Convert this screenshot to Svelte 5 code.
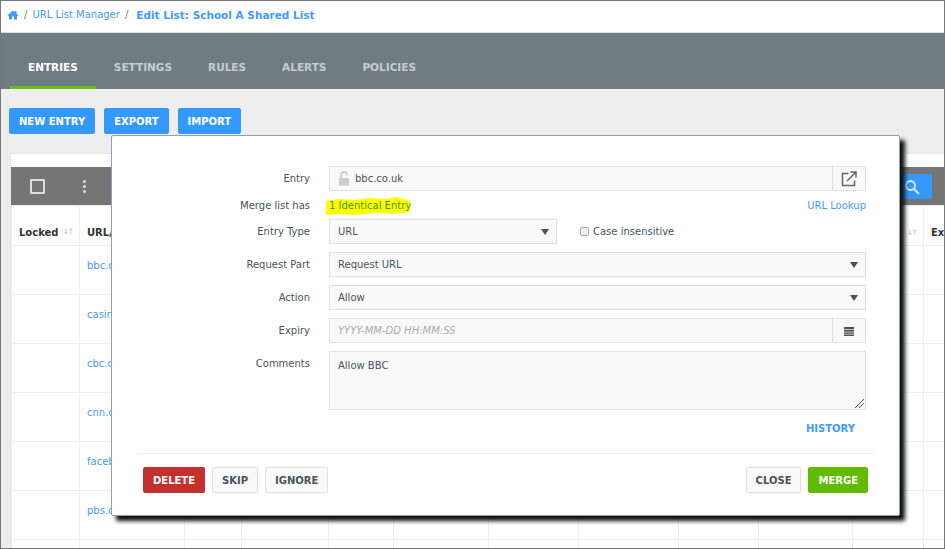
<script>
	const tabs = ['ENTRIES', 'SETTINGS', 'RULES', 'ALERTS', 'POLICIES'];
	const columns = [
		{ name: 'Locked', width: 68, sort: true },
		{ name: 'URL/Pattern', width: 105 },
		{ name: '', width: 57 },
		{ name: '', width: 87 },
		{ name: '', width: 65 },
		{ name: '', width: 95 },
		{ name: '', width: 90 },
		{ name: '', width: 100 },
		{ name: '', width: 80 },
		{ name: '', width: 94 },
		{ name: '', width: 71, sort: true },
		{ name: 'Expiry', width: 30 }
	];
	const rows = [
		{ url: 'bbc.co.uk' },
		{ url: 'casino.com' },
		{ url: 'cbc.ca' },
		{ url: 'cnn.com' },
		{ url: 'facebook.com' },
		{ url: 'pbs.org' },
		{ url: 'pinterest.com', date: 'Aug 2, 2018 09:20:52' },
		{ url: 'reddit.com', edit: 'Edit', type: 'URL', part: 'URL', action: 'Deny', date: 'Aug 2, 2018 09:20:52', user: 'admin' }
	];
</script>

<div class="page">
	<nav class="crumbs">
		<svg class="home" viewBox="0 0 24 20" width="12" height="10"><path d="M12 1 1 10.500 2.500 12.200 4 11v8h6v-6h4v6h6v-8l1.500 1.200L23 10.500 19 7V2h-3v2.400z" /></svg>
		<span class="sep">/</span>
		<a href="#list">URL List Manager</a>
		<span class="sep">/</span>
		<a class="current" href="#edit">Edit List: School A Shared List</a>
	</nav>

	<div class="tabs">
		{#each tabs as tab, i}
			<div class="tab" class:active={i === 0}>{tab}</div>
		{/each}
	</div>

	<div class="actions">
		<button class="btn blue">NEW ENTRY</button>
		<button class="btn blue">EXPORT</button>
		<button class="btn blue">IMPORT</button>
	</div>

	<section class="panel">
		<div class="strip"></div>
		<div class="toolbar">
			<span class="check"></span>
			<span class="dots"><i></i><i></i><i></i></span>
			<span class="search">
				<svg viewBox="0 0 16 16" width="16" height="16"><circle cx="6.500" cy="6.500" r="4.500" /><path d="m10 10 5 5" /></svg>
			</span>
		</div>
		<table>
			<colgroup>
				{#each columns as col}
					<col style:width="{col.width}px" />
				{/each}
			</colgroup>
			<thead>
				<tr>
					{#each columns as col}
						<th>
							{col.name}
							{#if col.sort}<span class="sort">↓↑</span>{/if}
						</th>
					{/each}
				</tr>
			</thead>
			<tbody>
				{#each rows as row}
					<tr>
						<td></td>
						<td><a href="#u">{row.url}</a></td>
						<td><a href="#e">{row.edit ?? ''}</a></td>
						<td><a href="#t">{row.type ?? ''}</a></td>
						<td><a href="#p">{row.part ?? ''}</a></td>
						<td><a href="#a">{row.action ?? ''}</a></td>
						<td></td>
						<td>{row.date ?? ''}</td>
						<td>{row.user ?? ''}</td>
						<td></td>
						<td></td>
						<td></td>
					</tr>
				{/each}
			</tbody>
		</table>
	</section>

	<div class="modal">
		<div class="form">
			<span class="label">Entry</span>
			<div class="group">
				<div class="field input">
					<svg class="lock" viewBox="0 0 12 15" width="12" height="15"><path d="M1 7h10v7.500H1z" /><path class="shackle" d="M3 7V4a3 3 0 0 1 6 0v.5" /></svg>
					bbc.co.uk
				</div>
				<span class="addon">
					<svg viewBox="0 0 16 16" width="16" height="16"><path class="stroke" d="M13.500 9.500v5h-12v-12h6" /><path class="stroke" d="M6 10 14.500 1.500M9.500 1h5.500v5.500" /></svg>
				</span>
			</div>

			<span class="label">Merge list has</span>
			<div class="merge">
				<span class="identical">
					<svg class="marker" viewBox="0 0 86 20" width="86" height="20" preserveAspectRatio="none"><path d="M1 5 14 3 30 4 44 2 62 3 70 1 80 3 85 5 85 16 70 18 50 17 30 19 12 18 1 19z" /></svg>
					<span class="identical-text">1 Identical Entry</span>
				</span>
				<a href="#lookup">URL Lookup</a>
			</div>

			<span class="label">Entry Type</span>
			<div class="type-row">
				<div class="field select short">URL<span class="caret"></span></div>
				<label class="case"><span class="box"></span>Case insensitive</label>
			</div>

			<span class="label">Request Part</span>
			<div class="field select">Request URL<span class="caret"></span></div>

			<span class="label">Action</span>
			<div class="field select">Allow<span class="caret"></span></div>

			<span class="label">Expiry</span>
			<div class="group">
				<div class="field input placeholder">YYYY-MM-DD HH:MM:SS</div>
				<span class="addon cal">
					<svg viewBox="0 0 10 10" width="10" height="10"><path fill="#45535e" d="M0 1h10v9H0z" /><path stroke="#fff" d="M0 3.500h10M0 6h10M0 8.200h10" stroke-width=".7" /></svg>
				</span>
			</div>

			<span class="label top">Comments</span>
			<div class="field area">
				Allow BBC
				<svg class="grip" viewBox="0 0 9 9" width="9" height="9"><path d="M0 9 9 0M4 9l5-5" /></svg>
			</div>
		</div>

		<div class="history"><a href="#history">HISTORY</a></div>

		<footer>
			<button class="btn red">DELETE</button>
			<button class="btn plain">SKIP</button>
			<button class="btn plain">IGNORE</button>
			<span class="spacer"></span>
			<button class="btn plain">CLOSE</button>
			<button class="btn green">MERGE</button>
		</footer>
	</div>
</div>

<style>
	:global(body) {
		margin: 0;
	}

	.page {
		position: relative;
		box-sizing: border-box;
		width: 945px;
		height: 549px;
		overflow: hidden;
		border: 1px solid #777;
		background: #eee;
		font-family: "DejaVu Sans", Verdana, sans-serif;
		font-size: 10px;
		color: #45535e;
	}

	a {
		color: #3f9bff;
		text-decoration: none;
	}

	.crumbs {
		display: flex;
		align-items: center;
		height: 32px;
		padding: 0 0 4px 6px;
		box-sizing: border-box;
		background: #fff;
		border-bottom: 1px solid #ddd;
		gap: 5px;
	}

	.home {
		fill: #3f9bff;
	}

	.sep {
		color: #777;
	}

	.current {
		margin-left: 3px;
		font-weight: 700;
		font-size: 10.500px;
	}

	.tabs {
		display: flex;
		align-items: flex-end;
		height: 56px;
		padding-left: 9px;
		background: #6f7d83;
	}

	.tab {
		padding: 0 18px 13px;
		color: #c5cdd1;
		font-weight: 700;
		font-size: 10.500px;
		border-bottom: 3px solid transparent;
	}

	.tab.active {
		color: #fff;
		border-color: #66c011;
	}

	.actions {
		display: flex;
		gap: 9px;
		padding: 19px 0 0 8px;
	}

	.btn {
		height: 26px;
		padding: 0 9px;
		border: 1px solid #e0e0e0;
		border-radius: 2px;
		font: 700 10px "DejaVu Sans", Verdana, sans-serif;
		background: #f9f9f9;
		color: #45535e;
	}

	.btn.blue {
		background: #3399ff;
		border-color: #3399ff;
		color: #fff;
	}

	.btn.red {
		background: #c4302e;
		border-color: #c4302e;
		color: #fff;
	}

	.btn.green {
		background: #62bb00;
		border-color: #62bb00;
		color: #fff;
	}

	.panel {
		margin: 19px 0 0 9px;
		background: #fff;
		border-left: 1px solid #e6e6e6;
	}

	.strip {
		height: 13px;
		border-top: 1px solid #e6e6e6;
	}

	.toolbar {
		display: flex;
		align-items: center;
		height: 38px;
		background: #757575;
		padding-left: 19px;
		position: relative;
	}

	.check {
		width: 11px;
		height: 11px;
		border: 2px solid #ddd;
		border-radius: 1px;
	}

	.dots {
		display: flex;
		flex-direction: column;
		gap: 2px;
		margin-left: 38px;
	}

	.dots i {
		width: 3px;
		height: 3px;
		border-radius: 50%;
		background: #ddd;
	}

	.search {
		position: absolute;
		left: 880px;
		top: 7px;
		width: 41px;
		height: 25px;
		display: flex;
		align-items: center;
		justify-content: center;
		background: #3399ff;
		border-radius: 2px;
	}

	.search svg {
		fill: none;
		stroke: #d9ecff;
		stroke-width: 1.800;
	}

	table {
		border-collapse: collapse;
		table-layout: fixed;
		width: 942px;
	}

	th,
	td {
		border: 1px solid #eee;
		height: 40px;
		padding: 0 7px;
		text-align: left;
		overflow: hidden;
	}

	th {
		padding-top: 14px;
		box-sizing: border-box;
		font-weight: 700;
		color: #333;
		white-space: nowrap;
	}

	td {
		line-height: 14px;
		padding-bottom: 8px;
	}

	.sort {
		float: right;
		color: #ccd;
		font-size: 8px;
		letter-spacing: -2px;
	}

	.modal {
		position: absolute;
		left: 110px;
		top: 134px;
		box-sizing: border-box;
		width: 789px;
		height: 381px;
		display: flex;
		flex-direction: column;
		background: #fff;
		border: 1px solid #8d9fb3;
		border-radius: 2px;
		box-shadow: 5px 5px 4px #111;
	}

	.form {
		display: grid;
		grid-template-columns: 173px 537px;
		column-gap: 19px;
		row-gap: 8px;
		align-items: center;
		padding: 30px 0 0 25px;
	}

	.label {
		text-align: right;
		color: #45535e;
	}

	.label.top {
		align-self: start;
		padding-top: 7px;
	}

	.field {
		display: flex;
		align-items: center;
		position: relative;
		box-sizing: border-box;
		height: 25px;
		padding-left: 8px;
		background: #f9f9f9;
		border: 1px solid #e0e0e0;
		color: #45535e;
	}

	.group {
		display: flex;
	}

	.input {
		flex: 1;
	}

	.placeholder {
		color: #aaa;
		font-style: italic;
	}

	.lock {
		fill: #ccc;
		margin-right: 5px;
	}

	.shackle {
		fill: none;
		stroke: #ccc;
		stroke-width: 1.800;
	}

	.addon {
		display: flex;
		align-items: center;
		justify-content: center;
		box-sizing: border-box;
		width: 33px;
		height: 25px;
		background: #f9f9f9;
		border: 1px solid #e0e0e0;
		border-left: 0;
	}

	.stroke {
		fill: none;
		stroke: #666;
		stroke-width: 1.500;
	}

	.merge {
		display: flex;
		justify-content: space-between;
		align-items: center;
		height: 12px;
		padding: 0 0 0 0;
	}

	.identical {
		position: relative;
		display: inline-block;
		color: #3d9b00;
	}

	.identical-text {
		position: relative;
	}

	.marker {
		position: absolute;
		left: -4px;
		top: -4px;
		fill: #ffff00;
	}

	.type-row {
		display: flex;
		align-items: center;
		gap: 23px;
	}

	.select {
		justify-content: space-between;
		padding-right: 7px;
	}

	.short {
		width: 228px;
	}

	.caret {
		width: 0;
		height: 0;
		border-left: 4px solid transparent;
		border-right: 4px solid transparent;
		border-top: 6px solid #45535e;
	}

	.case {
		display: flex;
		align-items: center;
		gap: 4px;
	}

	.box {
		box-sizing: border-box;
		width: 9px;
		height: 9px;
		background: #eee;
		border: 1px solid #aaa;
		border-radius: 2px;
	}

	.area {
		align-items: flex-start;
		height: 59px;
		padding-top: 8px;
	}

	.grip {
		position: absolute;
		right: 1px;
		bottom: 1px;
		fill: none;
		stroke: #555;
	}

	.history {
		display: flex;
		justify-content: flex-end;
		padding: 13px 44px 0 0;
		font-weight: 700;
		font-size: 10px;
	}

	footer {
		display: flex;
		gap: 7px;
		margin: 19px 25px 0 25px;
		padding: 13px 6px 0;
		border-top: 1px solid #eee;
	}

	.spacer {
		flex: 1;
	}
</style>
